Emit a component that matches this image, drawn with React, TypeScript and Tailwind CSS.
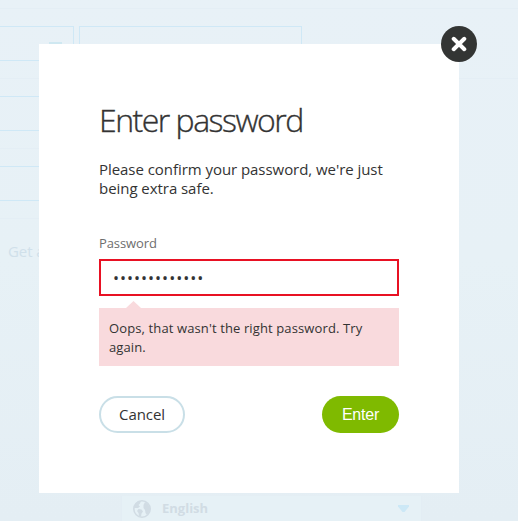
import { useState } from 'react';

function CloseIcon() {
  return (
    <svg width="16" height="16" viewBox="0 0 16 16" fill="none">
      <path
        d="M2.7 2.8 13.3 13.2M13.3 2.8 2.7 13.2"
        stroke="#fff"
        strokeWidth="4"
        strokeLinecap="round"
      />
    </svg>
  );
}

function GlobeIcon() {
  return (
    <svg width="18" height="18" viewBox="0 0 18 18" fill="none">
      <circle cx="9" cy="9" r="8.2" stroke="#d1dce4" strokeWidth="1.6" />
      <path
        d="M1 8 2 4l3-3 3 0-1 2.500L5.500 5 7 6.500 5 8zM5.500 9l3 .5 1.500 2-1.500 2L8 17l-2-1-.5-3-1.500-2zM10.500 5 12 2l3 2 2 4v3l-3 4-1.500-2-.5-3-1.500-2z"
        fill="#d1dce4"
      />
    </svg>
  );
}

function PageBehind() {
  return (
    <div className="h-full bg-linear-to-b from-[#e8f1f7] via-[#e7f1f6] to-[#e4eef4]">
      <div className="h-2" />
      <div className="flex h-[70px] gap-[5px] border-t border-[#e4eef5] pt-[17px]">
        <div className="flex h-[35px] w-[74px] justify-end border-y border-r border-[#cfe8f6] pt-[15px] pr-[11px]">
          <div className="h-2 w-[13px] bg-[#cfe8f1]" />
        </div>
        <div className="h-[35px] w-[223px] border border-[#cfe8f6]" />
      </div>
      <div className="h-[70px] border-t border-[#e4eef5] pt-[17px]">
        <div className="h-[35px] w-[74px] border-y border-[#cfe8f6]" />
      </div>
      <div className="h-[70px] w-20 border-t border-[#e4eef5] pt-[17px]">
        <div className="h-[35px] w-[74px] border-y border-[#cfe8f6]" />
      </div>
      <div className="h-[278px] w-20 border-t border-[#e4eef5] pt-[22px] pl-2 text-[15px] leading-5 tracking-[-0.1px] whitespace-nowrap text-[#d0e0ea]">
        Get a
      </div>
      <div className="ml-[121px] flex h-[25px] w-[301px] items-center border-x border-[#e3edf4] bg-[#e6f1f6] pr-[12px] pl-[11px]">
        <GlobeIcon />
        <span className="ml-[11px] text-[13px] font-bold text-[#d1dce4]">
          English
        </span>
        <svg className="ml-auto" width="11" height="7" viewBox="0 0 11 7">
          <path d="M0 0h11v1.500L6.500 7h-2L0 1.500z" fill="#cce8f6" />
        </svg>
      </div>
    </div>
  );
}

export default function App() {
  const [password, setPassword] = useState('correcthorse1');

  return (
    <div className="relative h-[521px] w-[518px] overflow-hidden font-['Open_Sans','Noto_Sans',sans-serif] text-[#333]">
      <PageBehind />
      <div className="absolute top-11 left-[39px] h-[449px] w-[420px] bg-white px-[60px] pt-[54px]">
        <button
          type="button"
          aria-label="Close"
          className="absolute -top-[18px] -right-[18px] flex size-9 items-center justify-center rounded-full bg-[#333534]"
        >
          <CloseIcon />
        </button>
        <h1 className="h-[44px] text-[32px] leading-[44px] font-light tracking-[-1.5px] whitespace-nowrap [-webkit-text-stroke:0.35px_#333]">
          Enter password
        </h1>
        <p className="mt-[18px] text-[15px] leading-[19px] tracking-[-0.05px] whitespace-nowrap">
          Please confirm your password, we're just
          <br />
          being extra safe.
        </p>
        <label
          htmlFor="password"
          className="mt-[35px] block text-[13px] leading-5 tracking-[-0.1px] text-[#6e6e6e]"
        >
          Password
        </label>
        <input
          id="password"
          type="password"
          value={password}
          onChange={(e) => setPassword(e.target.value)}
          className="mt-[6px] block h-[37px] w-[300px] border-2 border-[#e81123] bg-white px-[12px] text-[16px] tracking-[1px]"
        />
        <svg className="mt-[5px] ml-[27px] block" width="15" height="7" viewBox="0 0 15 7">
          <path d="M0 7 7.500 0 15 7z" fill="#f9dadd" />
        </svg>
        <p className="h-[58px] bg-[#f9dadd] px-[10px] pt-[11px] text-[13px] leading-[19px] tracking-[0.12px] whitespace-nowrap">
          Oops, that wasn't the right password. Try
          <br />
          again.
        </p>
        <div className="mt-[30px] flex justify-between">
          <button
            type="button"
            className="h-[37px] w-[86px] rounded-full border-2 border-[#c9dfe7] text-[15px] tracking-[-0.1px]"
          >
            Cancel
          </button>
          <button
            type="button"
            className="h-[37px] w-[77px] rounded-full bg-[#7fba00] font-['Liberation_Sans',Arial,sans-serif] text-[16px] tracking-[-0.2px] text-white"
          >
            Enter
          </button>
        </div>
      </div>
    </div>
  );
}
